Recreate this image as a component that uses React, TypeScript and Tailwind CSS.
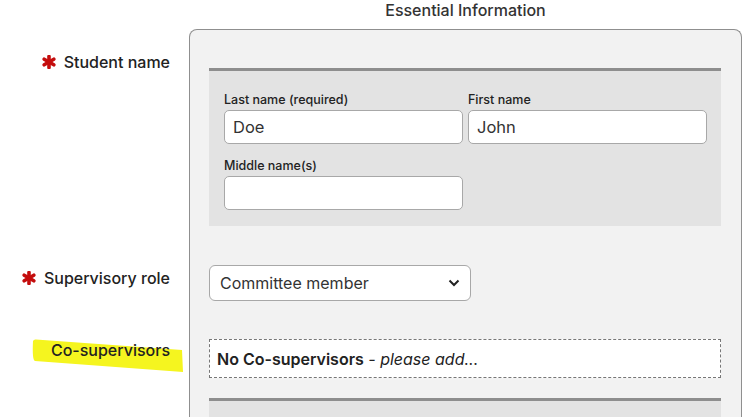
import React from 'react';

function Asterisk() {
  return (
    <svg width="14" height="14" viewBox="0 0 14 14" className="shrink-0">
      <g stroke="#c40d0d" strokeWidth="3.6" strokeLinecap="round">
        <line x1="7" y1="1.5" x2="7" y2="12.5" />
        <line x1="2.2" y1="4.2" x2="11.8" y2="9.8" />
        <line x1="2.2" y1="9.8" x2="11.8" y2="4.2" />
      </g>
    </svg>
  );
}

function Label({ text, required, highlight }: { text: string; required?: boolean; highlight?: boolean }) {
  return (
    <div className="relative flex items-center justify-end gap-2 pr-[19px] text-[16px] leading-[24px] font-medium text-[#222]">
      {highlight && (
        <svg className="absolute left-[32px] top-0" width="152" height="36" viewBox="0 0 152 36">
          <path d="M1 3 Q2 1 4 1.5 L150 12 L151 34 L3 23 Q0 22 1 3 Z" fill="#f5f51f" />
        </svg>
      )}
      {required && <Asterisk />}
      <span className="relative">{text}</span>
    </div>
  );
}

function Field({ label, value }: { label: string; value?: string }) {
  return (
    <div className="flex flex-col">
      <span className="text-[12.5px] leading-[19px] font-medium text-[#222] mb-[1px]">{label}</span>
      <div className="h-[34px] rounded-[5px] border border-[#a8a8a8] bg-white px-2 flex items-center text-[16.5px] text-[#333]">
        {value}
      </div>
    </div>
  );
}

export default function App() {
  return (
    <div className="w-[744px] h-[417px] overflow-hidden bg-white" style={{ fontFamily: 'Inter, "Noto Sans", sans-serif' }}>
      <div className="grid grid-cols-[189px_553px]">
        <div />
        <div className="h-[29px] flex items-start justify-center text-[16px] leading-[20px] font-medium text-[#333]">
          Essential Information
        </div>

        {/* Student name */}
        <div className="pt-[21px]">
          <Label text="Student name" required />
        </div>
        <div className="border-x border-t border-[#8f8f8f] rounded-t-[8px] bg-[#f2f2f2] pl-[19px] pr-[20px] pt-[38px]">
          <div className="bg-[#e3e3e3] border-t-[3px] border-[#8e8e8e] pl-[15px] pr-[14px] pt-[19px] pb-[16px]">
            <div className="grid grid-cols-2 gap-x-[5px] gap-y-[12px]">
              <Field label="Last name (required)" value="Doe" />
              <Field label="First name" value="John" />
              <Field label="Middle name(s)" />
            </div>
          </div>
        </div>

        {/* Supervisory role */}
        <div className="h-[75px] flex flex-col justify-end pb-[11px]">
          <Label text="Supervisory role" required />
        </div>
        <div className="border-x border-[#8f8f8f] bg-[#f2f2f2] pl-[19px] pr-[20px] pt-[39px]">
          <div className="w-[262px] h-[36px] rounded-[6px] border border-[#a8a8a8] bg-white pl-[10px] pr-[10px] flex items-center justify-between text-[16px] text-[#333]">
            <span>Committee member</span>
            <svg width="12" height="8" viewBox="0 0 12 8">
              <path d="M1.5 1.5 L6 6 L10.5 1.5" fill="none" stroke="#222" strokeWidth="2" />
            </svg>
          </div>
        </div>

        {/* Co-supervisors */}
        <div className="pt-[37px]">
          <Label text="Co-supervisors" highlight />
        </div>
        <div className="border-x border-[#8f8f8f] bg-[#f2f2f2] pl-[19px] pr-[20px] pt-[38px] pb-[20px]">
          <div className="h-[39px] border border-dashed border-[#777] bg-white px-[7px] flex items-center text-[16px] text-[#222]">
            <span className="font-semibold">No Co-supervisors</span>
            <span className="italic">&nbsp;- please add...</span>
          </div>
        </div>

        <div />
        <div className="border-x border-[#8f8f8f] bg-[#f2f2f2] pl-[19px] pr-[20px]">
          <div className="h-[40px] bg-[#e3e3e3] border-t-[3px] border-[#8e8e8e]" />
        </div>
      </div>
    </div>
  );
}
